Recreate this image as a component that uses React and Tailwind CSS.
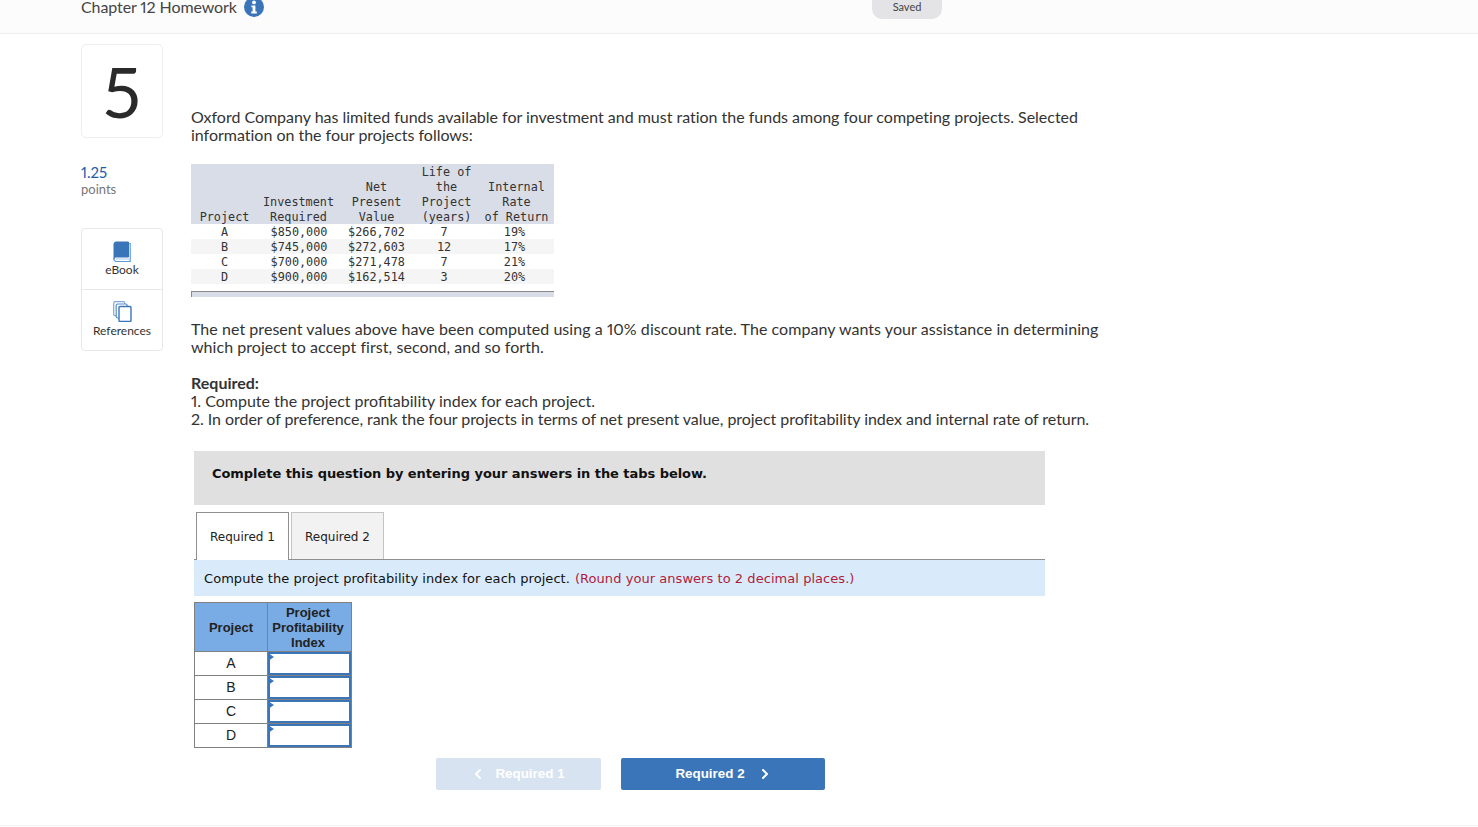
import { ChevronLeft, ChevronRight } from "lucide-react"

const rows = [
  ["A", "$850,000", "$266,702", "7", "19%"],
  ["B", "$745,000", "$272,603", "12", "17%"],
  ["C", "$700,000", "$271,478", "7", "21%"],
  ["D", "$900,000", "$162,514", "3", "20%"],
]

function InfoIcon() {
  return (
    <svg width="20" height="20" viewBox="0 0 20 20" className="ml-[7px] mt-[0px]">
      <circle cx="10" cy="10" r="10" fill="#3a75b9" />
      <circle cx="10" cy="5.4" r="1.9" fill="#fff" />
      <path d="M7.4 8.4h4v6.2h1.4v1.9H7.2v-1.9h1.4v-4.3H7.4z" fill="#fff" />
    </svg>
  )
}

function BookIcon() {
  return (
    <svg width="18" height="21" viewBox="0 0 18 21">
      <path d="M1 18.5V3a2 2 0 0 1 2-2h12.5v15H3a2 2 0 0 0-2 2.5z" fill="#3a75b9" stroke="#3a75b9" />
      <path d="M16.2 2.5h1v18H3.2a2.4 2.4 0 0 1-2.2-2" fill="none" stroke="#5b9bdc" strokeWidth="1.2" />
      <path d="M3 18h13" stroke="#b9d3ee" strokeWidth="1.2" />
    </svg>
  )
}

function PagesIcon() {
  return (
    <svg width="19" height="21" viewBox="0 0 19 21" fill="#fff">
      <rect x="0.7" y="0.7" width="11" height="14" rx="1.5" stroke="#7fa8d6" strokeWidth="1.2" />
      <rect x="3.2" y="3" width="11" height="14" rx="1.5" stroke="#5b8fc9" strokeWidth="1.2" />
      <rect x="6" y="5.5" width="12" height="15" rx="1" stroke="#3a75b9" strokeWidth="1.4" />
    </svg>
  )
}

// the mono table sits 1px lower in its cells than the line box gives
function Cell({ children }) {
  return <span className="relative top-px">{children}</span>
}

export default function App() {
  return (
    <div className="h-[827px] overflow-hidden bg-white text-[#333] font-['Lato',sans-serif] proportional-nums">
      {/* top bar */}
      <div className="h-[34px] bg-[#fcfcfc] border-b border-[#eeeeee] pl-[81px] flex items-start relative">
        <div className="flex items-start -mt-[3px]">
          <span className="text-[16px] leading-[20px] tracking-[-0.1px] text-[#444]">Chapter 12 Homework</span>
          <InfoIcon />
        </div>
        <div className="absolute left-[872px] top-0 w-[70px] h-[19px] rounded-b-[10px] bg-[#e4e3e5] text-[11px] leading-[13px] text-center text-[#444]">
          Saved
        </div>
      </div>

      <div className="flex pl-[81px] pt-[10px]">
        {/* left column */}
        <div className="w-[82px] shrink-0">
          <div className="h-[94px] pb-[1px] border border-[#eeeeee] rounded-[5px] flex items-center justify-center text-[70px] leading-none text-[#2a2a2a]">
            5
          </div>
          <div className="mt-[26px] text-[15px] leading-[17px] text-[#1a5ea8]">1.25</div>
          <div className="text-[13px] leading-[16px] text-[#777]">points</div>
          <div className="mt-[31px] border border-[#e8e8e8] rounded-[4px] text-[12px] text-[#333]">
            <div className="h-[61px] border-b border-[#e8e8e8] flex flex-col items-center pt-[12px]">
              <BookIcon />
              <span className="leading-[16px]">eBook</span>
            </div>
            <div className="h-[60px] flex flex-col items-center pt-[11px]">
              <PagesIcon />
              <span className="leading-[16px] mt-[1px]">References</span>
            </div>
          </div>
        </div>

        {/* question */}
        <div className="ml-[28px] flex-1 pt-[64px] text-[16px] leading-[18px]">
          <p className="w-[920px] tracking-[-0.015px]">
            Oxford Company has limited funds available for investment and must ration the funds among four competing projects. Selected information on the four projects follows:
          </p>

          <table className="mt-[20px] w-[363px] border-collapse font-['DejaVu_Sans_Mono',monospace] text-[11.8px] leading-[15px] text-[#333] table-fixed">
            <thead>
              <tr className="bg-[#d9dde8] align-bottom text-center">
                <th className="font-normal w-[67px]"><Cell>Project</Cell></th>
                <th className="font-normal w-[81px]"><Cell>Investment<br />Required</Cell></th>
                <th className="font-normal w-[75px]"><Cell>Net<br />Present<br />Value</Cell></th>
                <th className="font-normal w-[65px]"><Cell>Life of<br />the<br />Project<br />(years)</Cell></th>
                <th className="font-normal"><Cell>Internal<br />Rate<br />of Return</Cell></th>
              </tr>
            </thead>
            <tbody>
              {rows.map((r, i) => (
                <tr key={r[0]} className={i % 2 ? "bg-[#f5f5f5] text-center" : "text-center"}>
                  <td><Cell>{r[0]}</Cell></td>
                  <td className="pl-[1px]"><Cell>{r[1]}</Cell></td>
                  <td><Cell>{r[2]}</Cell></td>
                  <td className="pr-[5px]"><Cell>{r[3]}</Cell></td>
                  <td className="pr-[4px]"><Cell>{r[4]}</Cell></td>
                </tr>
              ))}
            </tbody>
          </table>
          <div className="mt-[7px] w-[363px] h-[6px] bg-[#d9dde8] border-t border-l border-[#888]"></div>

          <p className="mt-[23px] w-[920px] tracking-[0.05px]">
            The net present values above have been computed using a 10% discount rate. The company wants your assistance in determining which project to accept first, second, and so forth.
          </p>

          <p className="mt-[18px] font-bold">Required:</p>
          <p>1. Compute the project profitability index for each project.</p>
          <p className="tracking-[-0.05px]">2. In order of preference, rank the four projects in terms of net present value, project profitability index and internal rate of return.</p>

          {/* tabs block */}
          <div className="ml-[3px] w-[851px] font-['DejaVu_Sans',sans-serif]">
            <div className="mt-[23px] h-[54px] bg-[#e0e0e0] pl-[18px] pt-[14px] text-[13px] tracking-[-0.05px] font-bold text-[#111]">
              Complete this question by entering your answers in the tabs below.
            </div>
            <div className="mt-[7px] flex gap-[2px] pl-[2px] h-[48px] border-b border-[#8f8f8f] text-[12px] text-[#222]">
              <div className="w-[93px] h-[48px] bg-white border border-b-0 border-[#8f8f8f] flex items-center justify-center relative">Required 1</div>
              <div className="w-[93px] h-[47px] pt-[1px] bg-[#f2f2f2] border border-b-0 border-[#c4c4c4] flex items-center justify-center">Required 2</div>
            </div>
            <div className="h-[36px] bg-[#d9ebfa] pl-[10px] pt-[1px] flex items-center text-[13px] tracking-[0.05px] text-[#111]">
              <span>Compute the project profitability index for each project.</span>
              <span className="ml-[5px] text-[#b01c3c]">(Round your answers to 2 decimal places.)</span>
            </div>

            <table className="mt-[6px] border-collapse font-['Liberation_Sans',sans-serif] text-[14px] leading-[15px] text-[#222] text-center table-fixed w-[158px]">
              <thead>
                <tr className="bg-[#79ace5] text-[13px]">
                  <th className="w-[73px] h-[49px] border border-[#808080] font-bold">Project</th>
                  <th className="border border-[#808080] font-bold pr-[3px]">Project<br />Profitability<br />Index</th>
                </tr>
              </thead>
              <tbody>
                {rows.map((r) => (
                  <tr key={r[0]} className="h-[24px]">
                    <td className="border border-[#808080]">{r[0]}</td>
                    <td className="border border-[#808080] p-0">
                      <div className="relative h-[23px] border-2 border-[#3a75b9]">
                        <span className="absolute -left-[2px] -top-[1px] w-0 h-0 border-y-[4px] border-y-transparent border-l-[6px] border-l-[#3a75b9]"></span>
                      </div>
                    </td>
                  </tr>
                ))}
              </tbody>
            </table>
          </div>

          {/* prev / next */}
          <div className="mt-[10px] ml-[245px] flex gap-[20px] font-['Liberation_Sans',sans-serif] text-[13.4px] font-bold text-white">
            <div className="w-[165px] h-[32px] rounded-[2px] bg-[#d7e3f1] flex items-center justify-center">
              <ChevronLeft size={16} strokeWidth={3} className="mr-[9px] -ml-[2px]" />
              Required 1
            </div>
            <div className="w-[204px] h-[32px] pl-[2px] rounded-[2px] bg-[#3a75b9] flex items-center justify-center">
              Required 2
              <ChevronRight size={16} strokeWidth={3} className="ml-[12px]" />
            </div>
          </div>
        </div>
      </div>
      <div className="mt-[35px] border-t border-[#f0f0f0]"></div>
    </div>
  )
}
